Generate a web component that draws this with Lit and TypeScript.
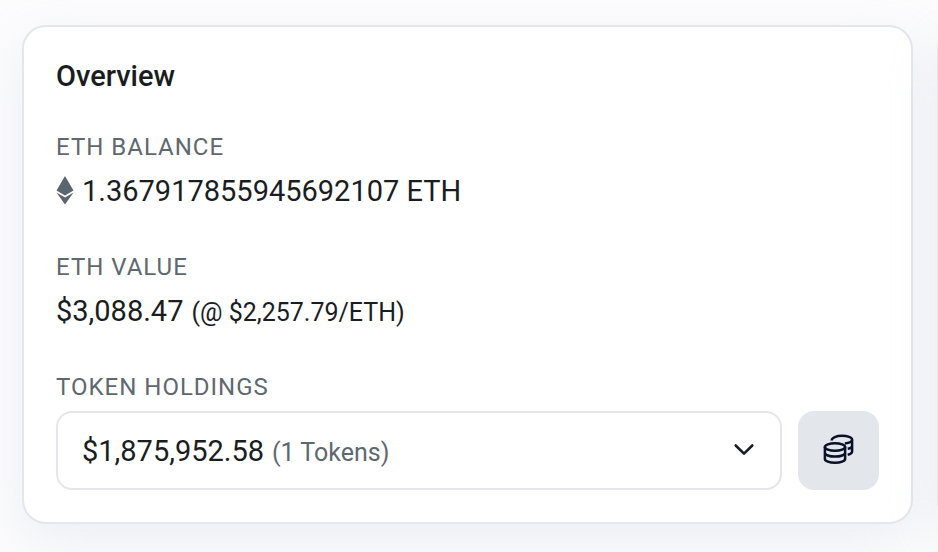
import { LitElement, html, css } from "lit";
import { customElement } from "lit/decorators.js";

@customElement("app-root")
export class AppRoot extends LitElement {
  static styles = css`
    :host {
      display: block;
      min-height: 100vh;
      box-sizing: border-box;
      overflow: hidden;
      background: #fcfcfd;
      color: #1a1d1f;
      font-family: Roboto, "Liberation Sans", sans-serif;
    }
    * {
      box-sizing: border-box;
    }
    .row {
      display: grid;
      grid-template-columns: minmax(0, 1fr) 1px;
      column-gap: 24px;
      padding: 25px 0 29px 22px;
    }
    .card {
      min-width: 0;
      padding: 32px;
      border: 2px solid #e4e6eb;
      border-radius: 24px;
      background: #fff;
      box-shadow: 0 16px 48px rgba(189, 197, 219, 0.24);
    }
    .next {
      width: 400px;
    }
    h2,
    h3,
    p {
      margin: 0;
      font-weight: 400;
    }
    h2 {
      margin-bottom: 36px;
      font-size: 29px;
      line-height: 34px;
      font-weight: 500;
    }
    .sections {
      display: flex;
      flex-direction: column;
      gap: 38px;
    }
    .section {
      display: flex;
      flex-direction: column;
      gap: 6px;
    }
    h3 {
      color: #5e6870;
      font-size: 24px;
      line-height: 36px;
      letter-spacing: 1px;
    }
    .value {
      display: flex;
      align-items: center;
      font-size: 29px;
      line-height: 40px;
    }
    .eth {
      flex: none;
      width: 18px;
      height: 30px;
      margin-right: 8px;
    }
    .baseline {
      align-items: baseline;
      gap: 8px;
    }
    .small {
      font-size: 25px;
      line-height: 36px;
    }
    .holdings {
      display: flex;
      gap: 16px;
    }
    button {
      margin: 0;
      font: inherit;
      color: inherit;
      cursor: pointer;
      border-radius: 16px;
    }
    .picker {
      flex: 1;
      min-width: 0;
      display: flex;
      align-items: center;
      justify-content: space-between;
      height: 79px;
      padding: 0 24px;
      border: 2px solid #e4e6eb;
      background: #fff;
      font-size: 29px;
      line-height: 40px;
    }
    .picked {
      display: flex;
      align-items: baseline;
      gap: 8px;
    }
    .muted {
      color: #5e6870;
    }
    .chevron {
      width: 24px;
      height: 24px;
    }
    .coins {
      flex: none;
      display: flex;
      align-items: center;
      justify-content: center;
      width: 81px;
      height: 79px;
      padding: 0;
      border: 0;
      background: #e3e6eb;
      color: #081128;
    }
    .coins svg {
      width: 32px;
      height: 32px;
      overflow: visible;
    }
  `;

  render() {
    return html`
      <main class="row">
        <section class="card">
          <h2>Overview</h2>
          <div class="sections">
            <div class="section">
              <h3>ETH BALANCE</h3>
              <p class="value">
                <svg class="eth" viewBox="0 0 18 30" aria-hidden="true">
                  <path d="M9 0 17.5 14.5 9 19.5 0.5 14.5Z" fill="#5b656e" />
                  <path d="M0.5 16.5 9 21.5 17.5 16.5 9 28.5Z" fill="#5b656e" />
                </svg>
                <span>1.367917855945692107 ETH</span>
              </p>
            </div>
            <div class="section">
              <h3>ETH VALUE</h3>
              <p class="value baseline">
                <span>$3,088.47</span>
                <span class="small">(@ $2,257.79/ETH)</span>
              </p>
            </div>
            <div class="section">
              <h3 id="holdings">TOKEN HOLDINGS</h3>
              <div class="holdings">
                <button
                  class="picker"
                  type="button"
                  id="picker"
                  aria-haspopup="listbox"
                  aria-expanded="false"
                  aria-labelledby="holdings picker"
                >
                  <span class="picked">
                    <span>$1,875,952.58</span>
                    <span class="small muted">(1 Tokens)</span>
                  </span>
                  <svg class="chevron" viewBox="0 0 24 24" fill="none" aria-hidden="true">
                    <path
                      d="M3.7 6.5 12 14.6 20.3 6.5"
                      stroke="#1a1d1f"
                      stroke-width="2.6"
                      stroke-linecap="round"
                      stroke-linejoin="round"
                    />
                  </svg>
                </button>
                <button class="coins" type="button" aria-label="View token holdings">
                  <svg
                    viewBox="0 0 32 32"
                    fill="none"
                    stroke="currentColor"
                    stroke-width="2.5"
                    stroke-linecap="round"
                    aria-hidden="true"
                  >
                    <ellipse cx="12" cy="12" rx="10.1" ry="3.8" />
                    <path
                      d="M1.9 12v11.9c0 2.1 4.5 3.8 10.1 3.8s10.1-1.7 10.1-3.8V12M1.9 17.8c0 2.1 4.5 3.8 10.1 3.8s10.1-1.7 10.1-3.8"
                    />
                    <path
                      stroke-linecap="butt"
                      d="M8.7 5.5C8.7 2.6 13.4 0.8 19 0.8s10.1 1.7 10.1 3.8v11.8c0 1.6-1.6 2.7-4.4 3.3M29.1 4.6c0 2-2.9 3.4-7.3 3.8M29.1 10.4c0 1.6-1.6 2.8-4.4 3.4"
                    />
                  </svg>
                </button>
              </div>
            </div>
          </div>
        </section>
        <section class="card next" aria-hidden="true"></section>
      </main>
    `;
  }
}
